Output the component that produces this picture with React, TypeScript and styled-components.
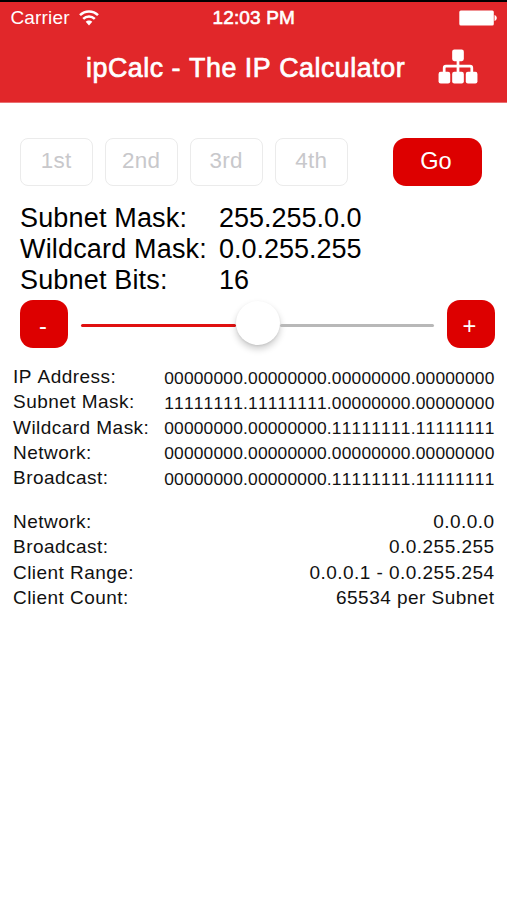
import React from "react";
import styled, { createGlobalStyle } from "styled-components";

const GlobalStyle = createGlobalStyle`
  * { box-sizing: border-box; }
  body { margin: 0; background: #fff; }
`;

const Screen = styled.div`
  width: 507px;
  height: 900px;
  overflow: hidden;
  background: #fff;
  color: #111;
  font-family: "Liberation Sans", Arial, sans-serif;
  font-kerning: none;
  white-space: nowrap;
`;

const Header = styled.header`
  height: 103px;
  background: #e1272a;
  color: #fff;
  border-top: 2px solid #000;
  border-bottom: 1px solid #ea6f71;
`;

const StatusBar = styled.div`
  display: grid;
  grid-template-columns: 1fr auto 1fr;
  align-items: center;
  height: 32px;
  padding: 0 10px 0 10.5px;
  font-size: 19px;
  letter-spacing: 0.15px;
`;

const Carrier = styled.div`
  display: flex;
  align-items: center;
  gap: 9px;
`;

const Clock = styled.div`
  -webkit-text-stroke: 0.6px #fff;
`;

const Battery = styled.svg`
  justify-self: end;
`;

const TitleBar = styled.div`
  display: flex;
  align-items: center;
  justify-content: space-between;
  height: 66px;
  padding: 0 29.5px 2px 86px;
`;

const Title = styled.h1`
  margin: 5px 0 0;
  font-size: 26.8px;
  font-weight: 400;
  letter-spacing: 0.53px;
  -webkit-text-stroke: 0.7px #fff;
`;

const OctetRow = styled.div`
  display: flex;
  gap: 12.5px;
  padding: 34.5px 25px 0 20px;
`;

const Octet = styled.input`
  width: 72.5px;
  height: 48px;
  padding: 0 0 1px;
  border: 1px solid #ebebeb;
  border-radius: 8px;
  background: #fff;
  text-align: center;
  font: 22.4px "Liberation Sans", Arial, sans-serif;
  letter-spacing: 0.3px;
  &::placeholder { color: #c8c8cb; opacity: 1; }
`;

const RedButton = styled.button`
  width: 48px;
  height: 48px;
  flex: none;
  padding: 5px 2px 0 0;
  border: 0;
  border-radius: 13px;
  background: #dd0000;
  color: #fff;
  font: 23.6px "Liberation Sans", Arial, sans-serif;
`;

const GoButton = styled(RedButton)`
  width: 89px;
  padding: 0 3px 0 0;
  margin-left: auto;
`;

const Summary = styled.dl`
  display: grid;
  grid-template-columns: 199px 1fr;
  grid-auto-rows: 31px;
  margin: 17px 0 0;
  padding-left: 20px;
  font-size: 27px;
  line-height: 31px;
  color: #000;
`;

const Term = styled.dt`
  letter-spacing: 0.17px;
`;

const Value = styled.dd`
  margin: 0;
`;

const SliderRow = styled.div`
  display: flex;
  align-items: center;
  gap: 12.5px;
  padding: 0 12.5px 0 20px;
  margin-top: 4px;
`;

const Track = styled.div`
  display: flex;
  align-items: center;
  flex: 1;
  height: 48px;
  padding-top: 3px;
`;

const Line = styled.div<{ $color: string; $grow: number }>`
  flex: ${(p) => p.$grow} 1 0;
  height: 3px;
  border-radius: 2px;
  background: ${(p) => p.$color};
`;

const Thumb = styled.div`
  width: 44px;
  height: 44px;
  margin-top: -4px;
  border-radius: 50%;
  background: #fff;
  box-shadow: 0 4px 7px rgba(0, 0, 0, 0.2), 0 1px 2px rgba(0, 0, 0, 0.08);
`;

const Details = styled.div<{ $top: number }>`
  display: grid;
  grid-auto-rows: 25.3px;
  margin-top: ${(p) => p.$top}px;
  padding: 0 12.5px 0 13px;
  font-size: 19px;
  line-height: 25.3px;
  letter-spacing: 0.46px;
`;

const DetailRow = styled.div`
  display: flex;
  justify-content: space-between;
`;

const Bits = styled.span`
  padding-top: 1.5px;
  font-size: 17.4px;
  letter-spacing: 0.18px;
`;

const zeros = "00000000.00000000";
const ones = "11111111.11111111";

const summary = [
  ["Subnet Mask:", "255.255.0.0"],
  ["Wildcard Mask:", "0.0.255.255"],
  ["Subnet Bits:", "16"],
];

const binary = [
  ["IP Address:", `${zeros}.${zeros}`],
  ["Subnet Mask:", `${ones}.${zeros}`],
  ["Wildcard Mask:", `${zeros}.${ones}`],
  ["Network:", `${zeros}.${zeros}`],
  ["Broadcast:", `${zeros}.${ones}`],
];

const results = [
  ["Network:", "0.0.0.0"],
  ["Broadcast:", "0.0.255.255"],
  ["Client Range:", "0.0.0.1 - 0.0.255.254"],
  ["Client Count:", "65534 per Subnet"],
];

function WifiIcon() {
  return (
    <svg width="20" height="16" viewBox="0 0 20 16" fill="none" stroke="#fff" strokeWidth="2.5">
      <path d="M1 5.2C6 .2 14 .2 19 5.2" />
      <path d="M4.2 8.9c3.3-3.2 8.3-3.2 11.6 0" />
      <path d="M6.7 11.8c1.8-1.9 4.8-1.9 6.6 0L10 15.4z" fill="#fff" stroke="none" />
    </svg>
  );
}

function SitemapIcon() {
  return (
    <svg width="40" height="35" viewBox="0 0 41 36" fill="#fff">
      <rect x="14.5" y="0.5" width="12" height="12" rx="2.2" />
      <rect x="0.5" y="23.5" width="12" height="12" rx="2.2" />
      <rect x="14.5" y="23.5" width="12" height="12" rx="2.2" />
      <rect x="28.5" y="23.5" width="12" height="12" rx="2.2" />
      <path d="M20.5 12v12M6.3 24v-4.5q0-1.8 1.8-1.8h24.8q1.8 0 1.8 1.8V24" fill="none" stroke="#fff" strokeWidth="2.8" />
    </svg>
  );
}

export default function App() {
  return (
    <Screen>
      <GlobalStyle />
      <Header>
        <StatusBar>
          <Carrier>
            Carrier
            <WifiIcon />
          </Carrier>
          <Clock>12:03 PM</Clock>
          <Battery width="38" height="16" viewBox="0 0 38 16" fill="#fff">
            <rect x="0.3" y="0.5" width="34.5" height="15" rx="1.5" />
            <path d="M35.5 5c3 1 3 5 0 6z" />
          </Battery>
        </StatusBar>
        <TitleBar>
          <Title>ipCalc - The IP Calculator</Title>
          <SitemapIcon />
        </TitleBar>
      </Header>
      <OctetRow>
        {["1st", "2nd", "3rd", "4th"].map((label) => (
          <Octet key={label} placeholder={label} />
        ))}
        <GoButton>Go</GoButton>
      </OctetRow>
      <Summary>
        {summary.map(([term, value]) => (
          <React.Fragment key={term}>
            <Term>{term}</Term>
            <Value>{value}</Value>
          </React.Fragment>
        ))}
      </Summary>
      <SliderRow>
        <RedButton>-</RedButton>
        <Track>
          <Line $color="#e01010" $grow={156} />
          <Thumb />
          <Line $color="#b8b8b8" $grow={154} />
        </Track>
        <RedButton>+</RedButton>
      </SliderRow>
      <Details $top={16.5}>
        {binary.map(([label, bits]) => (
          <DetailRow key={label}>
            <span>{label}</span>
            <Bits>{bits}</Bits>
          </DetailRow>
        ))}
      </Details>
      <Details $top={18.5}>
        {results.map(([label, value]) => (
          <DetailRow key={label}>
            <span>{label}</span>
            <span>{value}</span>
          </DetailRow>
        ))}
      </Details>
    </Screen>
  );
}
